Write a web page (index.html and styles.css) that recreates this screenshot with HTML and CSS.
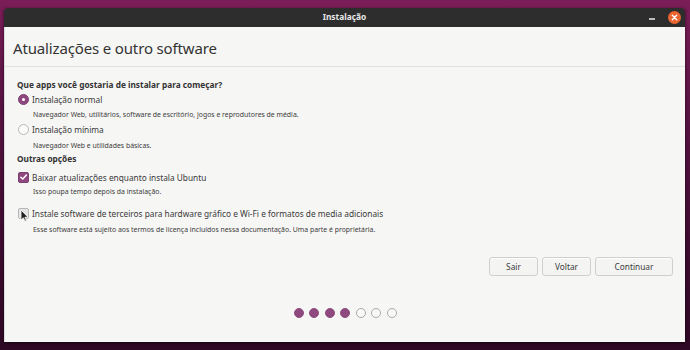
FILE: index.html
```html
<!DOCTYPE html>
<html lang="pt">
<head>
<meta charset="utf-8">
<link rel="stylesheet" href="styles.css">
</head>
<body>
<div class="desktop">
  <div class="window">
    <div class="titlebar">
      <span class="title">Instalação</span>
      <span class="minimize"></span>
      <span class="close">
        <svg width="13" height="13" viewBox="0 0 13 13"><circle cx="6.5" cy="6.5" r="6.5" fill="#e9652f"/><path d="M4.3 4.3 L8.7 8.7 M8.7 4.3 L4.3 8.7" stroke="#fff" stroke-width="1.4" stroke-linecap="round"/></svg>
      </span>
    </div>
    <div class="content">
      <div class="header">Atualizações e outro software</div>
      <div class="body">
        <div class="section-title">Que apps você gostaria de instalar para começar?</div>
        <div class="option o1">
          <span class="radio checked"></span>
          <span class="label">Instalação normal</span>
        </div>
        <div class="desc d1">Navegador Web, utilitários, software de escritório, jogos e reprodutores de média.</div>
        <div class="option o2">
          <span class="radio"></span>
          <span class="label">Instalação mínima</span>
        </div>
        <div class="desc d2">Navegador Web e utilidades básicas.</div>
        <div class="section-title">Outras opções</div>
        <div class="option o3">
          <span class="check checked">
            <svg width="10" height="10" viewBox="0 0 10 10"><path d="M2 5.2 L4.2 7.3 L8.2 2.8" stroke="#fff" stroke-width="1.6" fill="none" stroke-linecap="round" stroke-linejoin="round"/></svg>
          </span>
          <span class="label">Baixar atualizações enquanto instala Ubuntu</span>
        </div>
        <div class="desc d3">Isso poupa tempo depois da instalação.</div>
        <div class="option o4">
          <span class="check hover">
            <svg class="cursor" width="9" height="13" viewBox="0 0 9 13"><path d="M1 1 L1 11 L3.4 8.8 L5 12.2 L6.4 11.6 L4.9 8.3 L8 8.2 Z" fill="#222" stroke="#fff" stroke-width="0.8"/></svg>
          </span>
          <span class="label">Instale software de terceiros para hardware gráfico e Wi-Fi e formatos de media adicionais</span>
        </div>
        <div class="desc d4">Esse software está sujeito aos termos de licença incluídos nessa documentação. Uma parte é proprietária.</div>
        <div class="buttons">
          <button class="btn">Sair</button>
          <button class="btn">Voltar</button>
          <button class="btn wide">Continuar</button>
        </div>
        <div class="dots">
          <span class="dot on"></span>
          <span class="dot on"></span>
          <span class="dot on"></span>
          <span class="dot on"></span>
          <span class="dot"></span>
          <span class="dot"></span>
          <span class="dot"></span>
        </div>
      </div>
    </div>
  </div>
</div>
</body>
</html>
```
FILE: styles.css
```css
* { box-sizing: border-box; }
html, body { margin: 0; padding: 0; }
body {
  width: 690px;
  height: 350px;
  overflow: hidden;
  font-family: "Noto Sans", "Open Sans", sans-serif;
}
.desktop {
  width: 690px;
  height: 350px;
  background: linear-gradient(180deg, #7b1d58 0%, #5a1444 30%, #3e0c30 70%, #2e0824 100%);
  padding: 8px 5px 0 4px;
}
.window {
  width: 681px;
  height: 334px;
  display: flex;
  flex-direction: column;
  box-shadow: 0 1px 3px rgba(0,0,0,0.6);
}
.titlebar {
  height: 19px;
  background: #2d2d2d;
  display: flex;
  align-items: center;
  justify-content: flex-end;
  position: relative;
  color: #e6e6e6;
  border-radius: 4px 4px 0 0;
}
.title {
  position: absolute;
  left: 0;
  right: 0;
  top: 3px;
  text-align: center;
  font-size: 8.4px;
  font-weight: bold;
  line-height: 12px;
}
.minimize {
  width: 6px;
  height: 2px;
  background: #bdbdbd;
  margin-right: 13px;
  margin-top: 3px;
}
.close {
  width: 13px;
  height: 13px;
  margin-right: 4px;
  display: flex;
}
.content {
  flex: 1;
  background: #f6f6f5;
  display: flex;
  flex-direction: column;
  border-left: 1px solid #dcdcdc;
}
.header {
  height: 40px;
  border-bottom: 1px solid #e2e2e2;
  font-size: 15px;
  letter-spacing: -0.15px;
  color: #333;
  padding: 10px 0 0 8px;
  line-height: 22px;
}
.body {
  padding: 12px 0 0 12px;
  color: #3c3c3c;
  flex: 1;
  display: flex;
  flex-direction: column;
}
.section-title {
  font-size: 8.3px;
  font-weight: bold;
  line-height: 12px;
  height: 12px;
  color: #333;
}
.option {
  display: flex;
  align-items: center;
  height: 14px;
}
.o1 { margin-top: 1px; }
.o2 { margin-top: 0; }
.o3 { margin-top: 5px; }
.o4 { margin-top: 7px; }
.label {
  font-size: 8.3px;
  margin-left: 3px;
  color: #3a3a3a;
}
.radio {
  width: 11px;
  height: 11px;
  border-radius: 50%;
  border: 1px solid #b8b8b8;
  background: #fbfbfb;
  margin-left: 1px;
}
.radio.checked {
  background: #8e4a7f;
  border-color: #7d3f70;
  position: relative;
}
.radio.checked::after {
  content: "";
  position: absolute;
  left: 3px; top: 3px;
  width: 3px; height: 3px;
  border-radius: 50%;
  background: #fff;
}
.check {
  width: 11px;
  height: 11px;
  border-radius: 2px;
  border: 1px solid #b8b8b8;
  background: #fbfbfb;
  margin-left: 1px;
  display: flex;
  align-items: center;
  justify-content: center;
  position: relative;
}
.check.checked {
  background: #8e4a7f;
  border-color: #7d3f70;
}
.check.hover { background: #e4e4e4; }
.cursor {
  position: absolute;
  left: 1px;
  top: 0px;
}
.desc {
  font-size: 6.9px;
  color: #3c3c3c;
  padding-left: 16px;
  height: 14px;
  line-height: 14px;
}
.d1 { margin-top: 2px; }
.d2 { margin-top: 3px; }
.d3 { margin-top: 1px; }
.d4 { margin-top: 3px; }
.buttons {
  display: flex;
  justify-content: flex-end;
  gap: 4px;
  margin-top: 20px;
  padding-right: 12px;
}
.btn {
  font-family: inherit;
  font-size: 8.3px;
  color: #3c3c3c;
  background: #f4f4f3;
  border: 1px solid #cfcfcd;
  border-radius: 3px;
  height: 19px;
  width: 49px;
  padding: 0;
  box-shadow: inset 0 1px 0 #fff;
}
.btn.wide { width: 78px; }
.dots {
  display: flex;
  justify-content: center;
  gap: 5.5px;
  margin-top: 32px;
  padding-right: 12px;
}
.dot {
  width: 10px;
  height: 10px;
  border-radius: 50%;
  border: 1px solid #a8a8a8;
  background: #fafafa;
}
.dot.on {
  background: #8e4a7f;
  border-color: #8e4a7f;
}
```
